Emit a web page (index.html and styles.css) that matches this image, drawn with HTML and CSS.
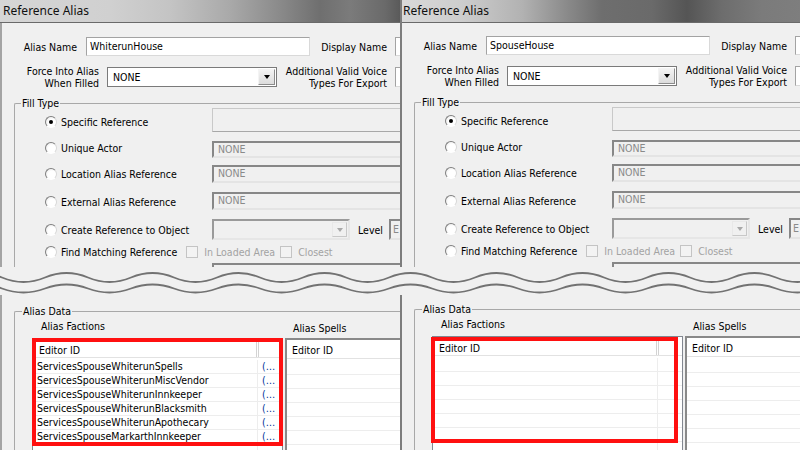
FILE: index.html
```html
<!DOCTYPE html>
<html>
<head>
<meta charset="utf-8">
<title>Reference Alias</title>
<link rel="stylesheet" href="styles.css">
</head>
<body>
<div class="screen">
  <div class="band band-top">
    <section class="pane pane-l">
      <div class="titlebar tb-l">Reference Alias</div>
      <div class="client">
        <div class="row r1">
          <span class="lbl w75">Alias Name</span>
          <div class="edit e-name">WhiterunHouse</div>
          <span class="lbl w77">Display Name</span>
          <div class="edit e-side"></div>
        </div>
        <div class="row r2">
          <span class="lbl w97">Force Into Alias<br>When Filled</span>
          <div class="combo"><span class="ctext">NONE</span><span class="ddbtn"><i class="arrow"></i></span></div>
          <span class="lbl w110">Additional Valid Voice<br>Types For Export</span>
          <div class="edit e-side tall"></div>
        </div>
        <div class="group fill">
          <div class="gtitle">Fill Type</div>
          <div class="opt oa"><span class="olabel"><span class="radio on"></span><span class="otext">Specific Reference</span></span><div class="field flat"></div></div>
          <div class="opt ob"><span class="olabel"><span class="radio"></span><span class="otext">Unique Actor</span></span><div class="field sunk">NONE</div></div>
          <div class="opt oc"><span class="olabel"><span class="radio"></span><span class="otext">Location Alias Reference</span></span><div class="field sunk">NONE</div></div>
          <div class="opt od"><span class="olabel"><span class="radio"></span><span class="otext">External Alias Reference</span></span><div class="field sunk">NONE</div></div>
          <div class="opt oe"><span class="olabel"><span class="radio"></span><span class="otext">Create Reference to Object</span></span><div class="dcombo"><span class="ddbtn dis"><i class="arrow"></i></span></div><span class="level">Level</span><div class="field sunk lvl">E</div></div>
          <div class="opt of"><span class="olabel auto"><span class="radio"></span><span class="otext">Find Matching Reference</span></span><span class="check"></span><span class="ctxt">In Loaded Area</span><span class="check chk2"></span><span class="ctxt">Closest</span></div>
          <div class="opt og"><div class="field sunk gline"></div></div>
        </div>
      </div>
    </section>
    <section class="pane pane-r">
      <div class="titlebar tb-r">Reference Alias</div>
      <div class="client">
        <div class="row r1 up1">
          <span class="lbl w75">Alias Name</span>
          <div class="edit e-name">SpouseHouse</div>
          <span class="lbl w77">Display Name</span>
          <div class="edit e-side"></div>
        </div>
        <div class="row r2">
          <span class="lbl w97">Force Into Alias<br>When Filled</span>
          <div class="combo"><span class="ctext">NONE</span><span class="ddbtn"><i class="arrow"></i></span></div>
          <span class="lbl w110">Additional Valid Voice<br>Types For Export</span>
          <div class="edit e-side tall"></div>
        </div>
        <div class="group fill">
          <div class="gtitle">Fill Type</div>
          <div class="opt oa"><span class="olabel"><span class="radio on"></span><span class="otext">Specific Reference</span></span><div class="field flat"></div></div>
          <div class="opt ob"><span class="olabel"><span class="radio"></span><span class="otext">Unique Actor</span></span><div class="field sunk">NONE</div></div>
          <div class="opt oc"><span class="olabel"><span class="radio"></span><span class="otext">Location Alias Reference</span></span><div class="field sunk">NONE</div></div>
          <div class="opt od"><span class="olabel"><span class="radio"></span><span class="otext">External Alias Reference</span></span><div class="field sunk">NONE</div></div>
          <div class="opt oe"><span class="olabel"><span class="radio"></span><span class="otext">Create Reference to Object</span></span><div class="dcombo"><span class="ddbtn dis"><i class="arrow"></i></span></div><span class="level">Level</span><div class="field sunk lvl">E</div></div>
          <div class="opt of"><span class="olabel auto"><span class="radio"></span><span class="otext">Find Matching Reference</span></span><span class="check"></span><span class="ctxt">In Loaded Area</span><span class="check chk2"></span><span class="ctxt">Closest</span></div>
          <div class="opt og"><div class="field sunk gline"></div></div>
        </div>
      </div>
    </section>
  </div>

  <div class="tear">
    <svg width="800" height="28" viewBox="0 0 800 28" aria-hidden="true">
      <path class="wave" d="M-41 10.5 Q-19.5 1.5 2 10.5 T45 10.5 T88 10.5 T131 10.5 T174 10.5 T217 10.5 T260 10.5 T303 10.5 T346 10.5 T389 10.5 T432 10.5 T475 10.5 T518 10.5 T561 10.5 T604 10.5 T647 10.5 T690 10.5 T733 10.5 T776 10.5 T819 10.5"/>
      <path class="wave" d="M-41 21.5 Q-19.5 13.5 2 21.5 T45 21.5 T88 21.5 T131 21.5 T174 21.5 T217 21.5 T260 21.5 T303 21.5 T346 21.5 T389 21.5 T432 21.5 T475 21.5 T518 21.5 T561 21.5 T604 21.5 T647 21.5 T690 21.5 T733 21.5 T776 21.5 T819 21.5"/>
    </svg>
  </div>

  <div class="band band-bottom">
    <section class="pane pane-l">
      <div class="client">
        <div class="group adata">
          <div class="gtitle">Alias Data</div>
          <div class="lists">
            <div class="col col-a">
              <div class="ctitle">Alias Factions</div>
              <div class="list lf marked">
                <div class="lhead"><span class="hc1">Editor ID</span><span class="hc2"></span></div>
                <div class="lrow first"><span class="cell1">ServicesSpouseWhiterunSpells</span><span class="cell2">(…</span></div>
                <div class="lrow"><span class="cell1">ServicesSpouseWhiterunMiscVendor</span><span class="cell2">(…</span></div>
                <div class="lrow"><span class="cell1">ServicesSpouseWhiterunInnkeeper</span><span class="cell2">(…</span></div>
                <div class="lrow"><span class="cell1">ServicesSpouseWhiterunBlacksmith</span><span class="cell2">(…</span></div>
                <div class="lrow"><span class="cell1">ServicesSpouseWhiterunApothecary</span><span class="cell2">(…</span></div>
                <div class="lrow"><span class="cell1">ServicesSpouseMarkarthInnkeeper</span><span class="cell2">(…</span></div>
                <div class="lrow"><span class="cell1"></span><span class="cell2"></span></div>
              </div>
            </div>
            <div class="col col-b">
              <div class="ctitle">Alias Spells</div>
              <div class="list ls">
                <div class="lhead"><span class="hc1">Editor ID</span></div>
                <div class="lrow first"></div>
                <div class="lrow"></div>
                <div class="lrow"></div>
                <div class="lrow"></div>
                <div class="lrow"></div>
                <div class="lrow"></div>
                <div class="lrow"></div>
              </div>
            </div>
          </div>
        </div>
      </div>
    </section>
    <section class="pane pane-r">
      <div class="client">
        <div class="group adata up2">
          <div class="gtitle">Alias Data</div>
          <div class="lists">
            <div class="col col-a">
              <div class="ctitle">Alias Factions</div>
              <div class="list lf marked mark-r">
                <div class="lhead"><span class="hc1">Editor ID</span><span class="hc2"></span></div>
                <div class="lrow first"><span class="cell1"></span><span class="cell2"></span></div>
                <div class="lrow"><span class="cell1"></span><span class="cell2"></span></div>
                <div class="lrow"><span class="cell1"></span><span class="cell2"></span></div>
                <div class="lrow"><span class="cell1"></span><span class="cell2"></span></div>
                <div class="lrow"><span class="cell1"></span><span class="cell2"></span></div>
                <div class="lrow"><span class="cell1"></span><span class="cell2"></span></div>
                <div class="lrow"><span class="cell1"></span><span class="cell2"></span></div>
              </div>
            </div>
            <div class="col col-b">
              <div class="ctitle">Alias Spells</div>
              <div class="list ls">
                <div class="lhead"><span class="hc1">Editor ID</span></div>
                <div class="lrow first"></div>
                <div class="lrow"></div>
                <div class="lrow"></div>
                <div class="lrow"></div>
                <div class="lrow"></div>
                <div class="lrow"></div>
                <div class="lrow"></div>
              </div>
            </div>
          </div>
        </div>
      </div>
    </section>
  </div>
</div>
</body>
</html>
```

FILE: styles.css
```css
*, *::before, *::after { box-sizing: border-box; margin: 0; padding: 0; }
html, body { width: 800px; height: 450px; overflow: hidden; background: #f0f0f0; }
body {
  font-family: "DejaVu Sans Condensed", "DejaVu Sans", sans-serif;
  font-stretch: condensed;
  font-size: 10.5px;
  color: #000;
}
.screen { display: flex; flex-direction: column; width: 800px; height: 450px; }
.band { display: flex; overflow: hidden; flex: none; }
.band-top { height: 267px; }
.band-bottom { height: 155px; }
.pane { width: 400px; flex: none; overflow: hidden; display: flex; flex-direction: column; }
.pane-r { border-left: 2px solid #7d7d7d; }
.client { flex: 1; overflow: hidden; }
.pane-l .client { border-left: 2px solid #a4a4a4; }

.titlebar {
  flex: none;
  height: 23px;
  border-bottom: 1px solid #6a6a6a;
  font-family: "Noto Sans", sans-serif;
  font-size: 12px;
  line-height: 21px;
  padding-left: 3px;
  white-space: nowrap;
  color: #101010;
}
.tb-l {
  background: linear-gradient(90deg, #d6d6d6 0px, #d0d0d0 110px, #c4c4c4 170px, #a9a9a9 230px, #8a8a8a 280px, #6f6f6f 320px, #7b7b7b 350px, #6a6a6a 385px, #5a5a5a 400px);
}
.tb-r {
  padding-left: 1px;
  background: linear-gradient(90deg, #d9d9d9 0px, #cdcdcd 60px, #b2b2b2 120px, #8a8a8a 165px, #6e6e6e 200px, #6a6a6a 250px, #555 285px, #6d6d6d 320px, #7b7b7b 360px, #7e7e7e 400px);
}

/* form rows */
.row { display: flex; align-items: center; white-space: nowrap; flex: none; }
.r1 { margin-top: 14px; height: 19px; }
.r1.up1 { margin-top: 13px; }
.r2 { margin-top: 9px; height: 24px; }
.lbl { flex: none; text-align: right; line-height: 12px; }
.w75 { width: 75px; }
.w77 { width: 77px; }
.w97 { width: 97px; }
.w110 { width: 110px; }

.edit {
  flex: none;
  height: 19px;
  background: #fff;
  border: 1px solid;
  border-color: #a3a3a3 #d9d9d9 #d9d9d9 #a3a3a3;
  padding-left: 3px;
  line-height: 17px;
  white-space: nowrap;
}
.e-name { width: 224px; margin-left: 9px; }
.e-side { width: 100px; margin-left: 8px; }
.e-side.tall { height: 20px; }

.combo {
  flex: none;
  width: 170px;
  height: 20px;
  margin-left: 8px;
  background: #fff;
  border: 1px solid #7a7a7a;
  display: flex;
  align-items: center;
  justify-content: space-between;
  padding: 0 1px 0 5px;
}
.ddbtn {
  flex: none;
  width: 17px;
  height: 16px;
  border: 1px solid;
  border-color: #f4f4f4 #8c8c8c #8c8c8c #f4f4f4;
  background: linear-gradient(#f3f3f3, #dcdcdc);
  display: flex;
  align-items: center;
  justify-content: center;
}
.arrow {
  width: 0; height: 0;
  border-left: 3.5px solid transparent;
  border-right: 3.5px solid transparent;
  border-top: 4px solid #000;
}
.ddbtn.dis { background: #f0f0f0; border-color: #e8e8e8 #c8c8c8 #c8c8c8 #e8e8e8; }
.ddbtn.dis .arrow { border-top-color: #a8a8a8; }

/* group boxes */
.group {
  border-top: 1px solid #a8a8a8;
  border-left: 1px solid #a8a8a8;
  margin-left: 12px;
  width: 520px;
  border-top-left-radius: 2px;
}
.fill { margin-top: 14px; height: 400px; }
.gtitle {
  width: fit-content;
  margin: -7px 0 0 6px;
  padding: 0 1px;
  line-height: 13px;
  background: #f0f0f0;
}

.opt { display: flex; align-items: center; white-space: nowrap; }
.olabel { flex: none; width: 197px; padding-left: 30px; display: flex; align-items: center; }
.olabel.auto { width: auto; }
.otext { margin-left: 4px; line-height: 12px; }
.radio {
  flex: none;
  width: 12px; height: 12px;
  border-radius: 50%;
  border: 1px solid;
  border-color: #7f7f7f #d8d8d8 #ffffff #7f7f7f;
  background: radial-gradient(circle at 60% 60%, #ffffff 45%, #e2e2e2 100%);
  position: relative;
}
.radio.on::after {
  content: "";
  position: absolute;
  left: 3px; top: 3px;
  width: 4px; height: 4px;
  border-radius: 50%;
  background: #000;
}

.oa { margin-top: -2px; height: 24px; }
.oa .olabel { margin-top: 4px; }
.ob { margin-top: 9px; height: 17px; }
.ob .olabel { margin-top: -3px; }
.oc { margin-top: 7px; height: 18px; }
.od { margin-top: 9px; height: 18px; }
.od .olabel { margin-top: 2px; }
.oe { margin-top: 9px; height: 21px; }
.of { margin-top: 6px; height: 12px; }
.og { margin-top: 5px; height: 20px; align-items: flex-start; }

.field { flex: none; height: 100%; width: 260px; }
.flat { border: 1px solid #c9c9c9; border-bottom-color: #a8a8a8; }
.sunk {
  border: 2px solid;
  border-color: #878787 #e4e4e4 #e4e4e4 #878787;
  background: #f0f0f0;
  color: #8a8a8a;
  padding-left: 4px;
  line-height: 13px;
}
.dcombo {
  flex: none;
  width: 138px;
  height: 21px;
  border: 2px solid;
  border-color: #9a9a9a #e6e6e6 #e6e6e6 #9a9a9a;
  display: flex;
  justify-content: flex-end;
  align-items: center;
  padding-right: 1px;
}
.dcombo .ddbtn { width: 15px; height: 15px; }
.level { margin-left: 8px; line-height: 12px; }
.lvl { margin-left: 6px; width: 40px; padding-left: 2px; line-height: 17px; }
.check {
  flex: none;
  width: 12px; height: 12px;
  border: 1px solid #c4c4c4;
  background: #f3f3f3;
  margin-left: 9px;
}
.check.chk2 { margin-left: 5px; }
.ctxt { flex: none; margin-left: 6px; color: #a3a3a3; line-height: 12px; }
.gline { margin-left: 197px; width: 260px; height: 20px; }

/* tear */
.tear { flex: none; height: 28px; overflow: hidden; }
.tear svg { display: block; }
.wave { fill: none; stroke: #727272; stroke-width: 1.8; }

/* alias data */
.adata { margin-top: 16px; height: 200px; }
.adata.up2 { margin-top: 14px; }
.adata .gtitle { margin-left: 7px; }
.lists { display: flex; margin-left: 17px; align-items: flex-start; }
.col { flex: none; }
.col-a { width: 251px; }
.col-b { width: 220px; margin-left: 2px; }
.ctitle { line-height: 13px; white-space: nowrap; }
.col-a .ctitle { padding-left: 9px; margin-top: 2px; }
.col-b .ctitle { padding-left: 8px; margin-top: 4px; }

.list { background: #fff; position: relative; }
.col-a .list { margin-top: 5px; border: 1px solid #828790; }
.col-b .list { margin-top: 3px; border-top: 2px solid #898989; border-left: 2px solid #898989; }

.lhead { display: flex; height: 19px; border-bottom: 1px solid #e2e2e2; }
.hc1 { padding-left: 6px; padding-top: 5px; line-height: 12px; white-space: nowrap; }
.lf .hc1 { width: 226px; border-right: 3px double #d3d3d3; }
.ls .hc1 { padding-left: 5px; padding-top: 4px; }
.hc2 { flex: 1; }

.lrow { display: flex; height: 14px; border-bottom: 1px solid #ededed; white-space: nowrap; line-height: 13px; }
.lrow.first { height: 16px; padding-top: 2px; }
.cell1 { width: 225px; flex: none; overflow: hidden; padding-left: 4px; border-right: 1px solid #ededed; }
.cell2 { flex: 1; overflow: hidden; padding-left: 4px; color: #003399; }

.marked::after {
  content: "";
  position: absolute;
  left: -1px; top: -1px;
  width: 251px; height: 108px;
  border: 4px solid #ff1010;
}
.mark-r::after { left: -2px; top: 0; width: 247px; height: 106px; }
```
